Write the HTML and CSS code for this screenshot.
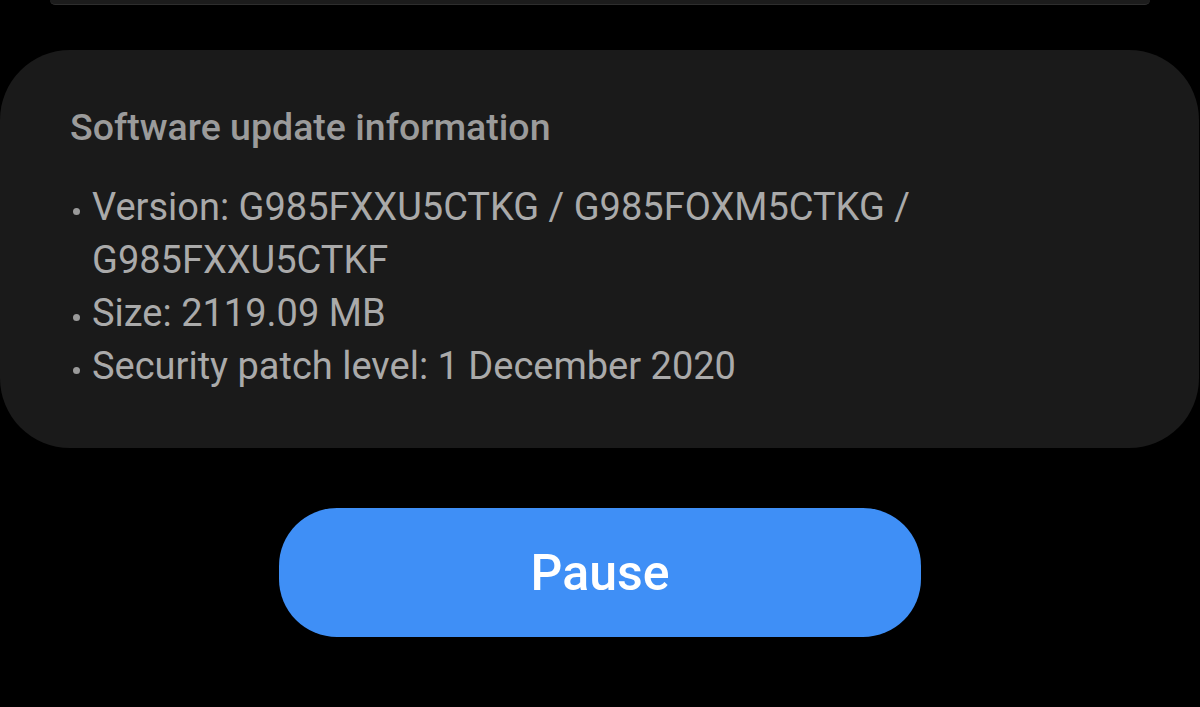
FILE: index.html
```html
<!DOCTYPE html>
<html>
<head>
<meta charset="utf-8">
<link rel="stylesheet" href="styles.css">
</head>
<body>
<div class="prev-card"></div>
<section class="info-card">
  <h2 class="info-title">Software update information</h2>
  <ul class="info-list">
    <li>Version: G985FXXU5CTKG / G985FOXM5CTKG / G985FXXU5CTKF</li>
    <li>Size: 2119.09 MB</li>
    <li>Security patch level: 1 December 2020</li>
  </ul>
</section>
<div class="actions">
  <button class="pause-btn">Pause</button>
</div>
</body>
</html>
```

FILE: styles.css
```css
html, body {
  margin: 0;
  padding: 0;
  background: #000;
  height: 100%;
  overflow: hidden;
}
body {
  font-family: Roboto, "Noto Sans", sans-serif;
}
.prev-card {
  height: 4px;
  margin: 0 50px;
  background: #1c1c1c;
  border-bottom: 1px solid #2e2e2e;
  border-radius: 0 0 16px 16px;
}
.info-card {
  margin: 45px 1px 0 0;
  height: 398px;
  box-sizing: border-box;
  background: #1a1a1a;
  border-radius: 70px;
  padding: 57px 70px 0 70px;
}
.info-title {
  margin: 0;
  font-size: 37.5px;
  font-weight: 500;
  line-height: 40px;
  color: #9b9b9b;
}
.info-list {
  list-style: none;
  margin: 34px 0 0 0;
  padding: 0 0 0 22px;
  max-width: 880px;
  color: #aaaaaa;
  font-size: 38px;
  line-height: 53px;
}
.info-list li {
  position: relative;
}
.info-list li::before {
  content: "";
  position: absolute;
  left: -19px;
  top: 27px;
  width: 7px;
  height: 7px;
  border-radius: 50%;
  background: #9a9a9a;
}
.actions {
  display: flex;
  justify-content: center;
  margin-top: 60px;
}
.pause-btn {
  width: 642px;
  height: 129px;
  border: none;
  border-radius: 58px;
  background: #3f8ff6;
  color: #fff;
  font-family: Roboto, "Noto Sans", sans-serif;
  font-size: 50px;
  font-weight: 500;
  padding: 0;
}
```
